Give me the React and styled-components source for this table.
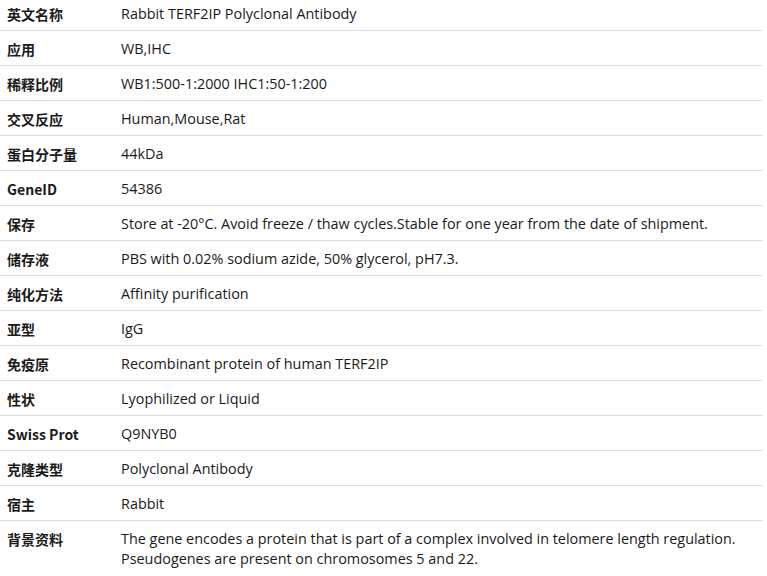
import styled, { createGlobalStyle } from "styled-components";

const GlobalStyle = createGlobalStyle`
  html, body {
    margin: 0;
    padding: 0;
    background: #fff;
  }
  body {
    font-family: "Open Sans", "Noto Sans CJK SC", sans-serif;
    color: #1a1a1a;
  }
`;

const rows = [
  ["英文名称", "Rabbit TERF2IP Polyclonal Antibody"],
  ["应用", "WB,IHC"],
  ["稀释比例", "WB1:500-1:2000 IHC1:50-1:200"],
  ["交叉反应", "Human,Mouse,Rat"],
  ["蛋白分子量", "44kDa"],
  ["GeneID", "54386"],
  ["保存", "Store at -20°C. Avoid freeze / thaw cycles.Stable for one year from the date of shipment."],
  ["储存液", "PBS with 0.02% sodium azide, 50% glycerol, pH7.3."],
  ["纯化方法", "Affinity purification"],
  ["亚型", "IgG"],
  ["免疫原", "Recombinant protein of human TERF2IP"],
  ["性状", "Lyophilized or Liquid"],
  ["Swiss Prot", "Q9NYB0"],
  ["克隆类型", "Polyclonal Antibody"],
  ["宿主", "Rabbit"],
  ["背景资料", "The gene encodes a protein that is part of a complex involved in telomere length regulation. Pseudogenes are present on chromosomes 5 and 22."],
];

const Table = styled.div`
  width: 762px;
  display: grid;
  grid-template-columns: 114px 1fr;
`;

const Cell = styled.div`
  box-sizing: border-box;
  min-height: ${(p) => (p.$first ? "31px" : "35px")};
  padding: ${(p) => (p.$first ? "4px 7px 6px" : "8px 7px 6px")};
  border-bottom: ${(p) => (p.$last ? "none" : "1px solid #dcdcdc")};
  font-size: ${(p) => (p.$label ? "14px" : "14.4px")};
  line-height: 20px;
  font-weight: ${(p) => (p.$label ? 700 : 400)};
  font-family: ${(p) =>
    p.$label
      ? '"Noto Sans CJK SC", "Open Sans", sans-serif'
      : '"Open Sans", "Noto Sans CJK SC", sans-serif'};
`;

export default function App() {
  return (
    <>
      <GlobalStyle />
      <Table>
        {rows.map(([label, value], i) => (
          <>
            <Cell key={`l${i}`} $label $first={i === 0} $last={i === rows.length - 1}>
              {label}
            </Cell>
            <Cell key={`v${i}`} $first={i === 0} $last={i === rows.length - 1}>
              {value}
            </Cell>
          </>
        ))}
      </Table>
    </>
  );
}
